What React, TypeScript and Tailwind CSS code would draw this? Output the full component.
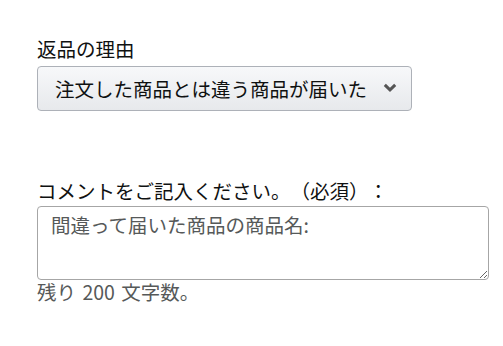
import React, { useState } from "react";

const reasons = [
  "注文した商品とは違う商品が届いた",
  "商品が破損していた",
  "不要になった",
];

export default function App() {
  const [reason, setReason] = useState(reasons[0]);
  const [comment, setComment] = useState("");
  const remaining = 200 - comment.length;

  return (
    <div
      className="w-[503px] h-[346px] bg-white pl-[37px] pt-[37px] text-[#0f1111] [text-spacing-trim:space-all]"
      style={{ fontFamily: '"Noto Sans CJK JP", sans-serif' }}
    >
      <div className="flex flex-col">
        <label htmlFor="reason" className="text-[19.5px] leading-[24px]">
          返品の理由
        </label>
        <div className="relative mt-[5px] w-[375px] h-[45px]">
          <select
            id="reason"
            value={reason}
            onChange={(e) => setReason(e.target.value)}
            className="appearance-none w-full h-full rounded-[4px] border border-[#adb1b8] bg-gradient-to-b from-[#f7f8fa] to-[#e7e9ec] pl-[17px] pr-10 text-[19.5px] text-[#0f1111] [text-spacing-trim:space-all] outline-none"
          >
            {reasons.map((r) => (
              <option key={r} value={r}>
                {r}
              </option>
            ))}
          </select>
          <svg
            className="absolute right-[15px] top-[17px] pointer-events-none"
            width="14"
            height="9"
            viewBox="0 0 14 9"
          >
            <path
              d="M1.8 1.8 L7 6.8 L12.2 1.8"
              fill="none"
              stroke="#555"
              strokeWidth="3"
            />
          </svg>
        </div>

        <label htmlFor="comment" className="mt-[68px] text-[19.5px] leading-[24px]">
          コメントをご記入ください。（必須）：
        </label>
        <textarea
          id="comment"
          value={comment}
          maxLength={200}
          onChange={(e) => setComment(e.target.value)}
          placeholder="間違って届いた商品の商品名:"
          className="mt-[3px] w-[452px] h-[74px] rounded-[4px] border border-[#a6a6a6] pt-[5px] pl-[13px] text-[19.5px] leading-[26px] text-[#0f1111] placeholder:text-[#565959] [text-spacing-trim:space-all] outline-none"
        />
        <p className="text-[19.5px] leading-[24px] text-[#565959] [word-spacing:2px]">
          残り {remaining} 文字数。
        </p>
      </div>
    </div>
  );
}
